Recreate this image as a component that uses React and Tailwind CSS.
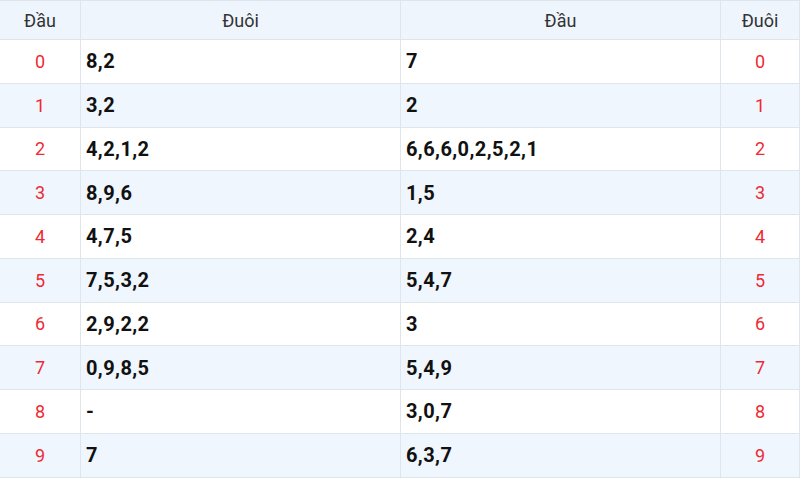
const ROWS = [
  { dau: 0, duoi: "8,2", dau2: "7" },
  { dau: 1, duoi: "3,2", dau2: "2" },
  { dau: 2, duoi: "4,2,1,2", dau2: "6,6,6,0,2,5,2,1" },
  { dau: 3, duoi: "8,9,6", dau2: "1,5" },
  { dau: 4, duoi: "4,7,5", dau2: "2,4" },
  { dau: 5, duoi: "7,5,3,2", dau2: "5,4,7" },
  { dau: 6, duoi: "2,9,2,2", dau2: "3" },
  { dau: 7, duoi: "0,9,8,5", dau2: "5,4,9" },
  { dau: 8, duoi: "-", dau2: "3,0,7" },
  { dau: 9, duoi: "7", dau2: "6,3,7" },
];

const cols = "grid grid-cols-[81px_320px_320px_79px]";

export default function App() {
  return (
    <div className="w-[800px] h-[479px] overflow-hidden bg-white font-['Roboto',sans-serif]">
      <div className={`${cols} h-[40px] bg-[#eef5fd] border-t border-b border-[#dfe5ec] text-[18px] text-[#333]`}>
        <div className="flex items-center justify-center border-r border-[#dfe5ec]">Đầu</div>
        <div className="flex items-center justify-center border-r border-[#dfe5ec]">Đuôi</div>
        <div className="flex items-center justify-center border-r border-[#dfe5ec]">Đầu</div>
        <div className="flex items-center justify-center border-r border-[#dfe5ec]">Đuôi</div>
      </div>
      {ROWS.map((r, i) => (
        <div
          key={r.dau}
          className={`${cols} h-[43.75px] border-b border-[#dfe5ec] ${i % 2 === 1 ? "bg-[#eff6fe]" : "bg-white"}`}
        >
          <div className="flex items-center justify-center border-r border-[#dfe5ec] text-[18px] text-[#ee2a33]">{r.dau}</div>
          <div className="flex items-center pl-[5px] border-r border-[#dfe5ec] text-[20px] font-bold text-[#111] tracking-[0.4px]">{r.duoi}</div>
          <div className="flex items-center pl-[5px] border-r border-[#dfe5ec] text-[20px] font-bold text-[#111] tracking-[0.4px]">{r.dau2}</div>
          <div className="flex items-center justify-center border-r border-[#dfe5ec] text-[18px] text-[#ee2a33]">{r.dau}</div>
        </div>
      ))}
    </div>
  );
}
